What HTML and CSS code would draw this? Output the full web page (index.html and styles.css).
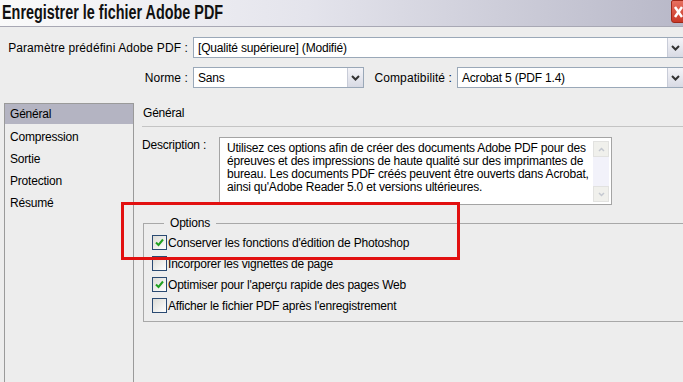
FILE: index.html
```html
<!DOCTYPE html>
<html lang="fr">
<head>
    <meta charset="UTF-8">
    <title>Enregistrer le fichier Adobe PDF</title>
    <link rel="stylesheet" href="styles.css">
</head>
<body>
    <div class="dialog">
        <div class="titlebar">
            <h1>Enregistrer le fichier Adobe PDF</h1>
            <div class="close">
                <svg width="12" height="18" viewBox="0 0 12 18"><path d="M3 4 L10 14 M10 4 L3 14" stroke="#fff" stroke-width="2.5" fill="none"/></svg>
            </div>
        </div>

        <div class="presets">
            <label class="lbl">Paramètre prédéfini Adobe PDF :</label>
            <div class="select wide">
                <span>[Qualité supérieure] (Modifié)</span>
                <span class="arrow"><svg width="9" height="6" viewBox="0 0 9 6"><path d="M1 1 L4.5 4.5 L8 1" stroke="#333" stroke-width="2" fill="none"/></svg></span>
            </div>
            <label class="lbl">Norme :</label>
            <div class="pair">
                <div class="select norme">
                    <span>Sans</span>
                    <span class="arrow"><svg width="9" height="6" viewBox="0 0 9 6"><path d="M1 1 L4.5 4.5 L8 1" stroke="#333" stroke-width="2" fill="none"/></svg></span>
                </div>
                <label class="lbl-inline">Compatibilité :</label>
                <div class="select compat">
                    <span>Acrobat 5 (PDF 1.4)</span>
                    <span class="arrow"><svg width="9" height="6" viewBox="0 0 9 6"><path d="M1 1 L4.5 4.5 L8 1" stroke="#333" stroke-width="2" fill="none"/></svg></span>
                </div>
            </div>
        </div>

        <div class="main">
            <ul class="sidebar">
                <li class="active">Général</li>
                <li>Compression</li>
                <li>Sortie</li>
                <li>Protection</li>
                <li>Résumé</li>
            </ul>

            <div class="panel">
                <div class="panel-title">Général</div>
                <div class="desc-row">
                    <div class="desc-label">Description :</div>
                    <div class="desc-box">
                        <p>Utilisez ces options afin de créer des documents Adobe PDF pour des épreuves et des impressions de haute qualité sur des imprimantes de bureau. Les documents PDF créés peuvent être ouverts dans Acrobat, ainsi qu'Adobe Reader 5.0 et versions ultérieures.</p>
                        <div class="scroll">
                            <span class="sbtn"><svg width="7" height="5" viewBox="0 0 7 5"><path d="M1 4 L3.5 1.5 L6 4" stroke="#c4c8d0" stroke-width="1.5" fill="none"/></svg></span>
                            <span class="sbtn"><svg width="7" height="5" viewBox="0 0 7 5"><path d="M1 1 L3.5 3.5 L6 1" stroke="#c4c8d0" stroke-width="1.5" fill="none"/></svg></span>
                        </div>
                    </div>
                </div>

                <fieldset class="options">
                    <legend>Options</legend>
                    <div class="check on">Conserver les fonctions d'édition de Photoshop</div>
                    <div class="check">Incorporer les vignettes de page</div>
                    <div class="check on">Optimiser pour l'aperçu rapide des pages Web</div>
                    <div class="check">Afficher le fichier PDF après l'enregistrement</div>
                </fieldset>

                <div class="highlight"></div>
            </div>
        </div>
    </div>
</body>
</html>
```

FILE: styles.css
```css
* {
    margin: 0;
    padding: 0;
    box-sizing: border-box;
}

body {
    font-family: "Liberation Sans", Arial, sans-serif;
    font-size: 12px;
    letter-spacing: -0.2px;
    color: #000;
    background: #ededed;
    overflow: hidden;
}

.dialog {
    width: 683px;
    height: 382px;
    overflow: hidden;
}

.titlebar {
    height: 27px;
    display: flex;
    justify-content: space-between;
    align-items: flex-start;
    background: linear-gradient(to right, #fafafa 0%, #e4e4ec 45%, #b8b8c8 100%);
    border-bottom: 1px solid #a8a8b4;
}

.titlebar h1 {
    font-size: 20px;
    font-weight: bold;
    letter-spacing: 0;
    margin: 1px 0 0 2px;
    color: #111;
    white-space: nowrap;
    transform: scaleX(0.72);
    transform-origin: left center;
}

.close {
    width: 14px;
    height: 23px;
    margin-right: -2px;
    background: linear-gradient(#e87060, #c83828);
    border: 1px solid #a02818;
    border-radius: 2px 0 0 3px;
    display: flex;
    align-items: center;
    justify-content: center;
}

.presets {
    display: grid;
    grid-template-columns: 188px 1fr;
    column-gap: 5px;
    row-gap: 9px;
    padding: 10px 0 0 0;
    align-items: center;
}

.lbl {
    text-align: right;
    white-space: nowrap;
    letter-spacing: 0.1px;
}

.lbl-inline {
    width: 93px;
    text-align: right;
    padding-right: 5px;
    white-space: nowrap;
    letter-spacing: 0.1px;
}

.pair {
    display: flex;
    align-items: center;
}

.select {
    height: 21px;
    flex-shrink: 0;
    background: #fff;
    border: 1px solid #9aa8b8;
    display: flex;
    align-items: center;
    justify-content: space-between;
    padding-left: 4px;
}

.select .arrow {
    width: 16px;
    height: 19px;
    border-left: 1px solid #c8ccd8;
    background: linear-gradient(#f4f4f8, #d8dae4);
    display: flex;
    align-items: center;
    justify-content: center;
}

.wide {
    width: 491px;
}

.norme {
    width: 171px;
}

.compat {
    width: 227px;
}

.main {
    display: flex;
    margin-top: 15px;
    height: 300px;
}

.sidebar {
    list-style: none;
    flex-shrink: 0;
    margin-left: 4px;
    width: 130px;
    border: 1px solid #9a9a9a;
    border-bottom: none;
}

.sidebar li {
    height: 22px;
    line-height: 22px;
    padding-left: 5px;
}

.sidebar li.active {
    background: #b4b4c2;
    height: 20px;
    line-height: 20px;
    margin-bottom: 2px;
}

.panel {
    flex: 1;
    position: relative;
    padding-left: 8px;
}

.panel-title {
    padding: 3px 0 0 1px;
    height: 24px;
    border-bottom: 1px solid #c4c4c4;
}

.desc-row {
    display: flex;
    margin-top: 10px;
}

.desc-label {
    width: 77px;
    flex-shrink: 0;
    padding-top: 1px;
}

.desc-box {
    width: 393px;
    height: 68px;
    flex-shrink: 0;
    background: #fff;
    border: 1px solid #a4a4a4;
    display: flex;
    padding: 3px 2px 2px 7px;
}

.desc-box p {
    flex: 1;
    line-height: 13px;
    padding-top: 1px;
}

.scroll {
    width: 16px;
    flex-shrink: 0;
    background: #f2f2fa;
    display: flex;
    flex-direction: column;
    justify-content: space-between;
    margin-left: 4px;
}

.sbtn {
    height: 16px;
    background: #f0f0ec;
    border: 1px solid #e2e2e0;
    display: flex;
    align-items: center;
    justify-content: center;
}

.options {
    margin: 11px 0 0 1px;
    border: 1px solid #a8a8a8;
    border-right: none;
    padding: 2px 0 5px 8px;
    width: 560px;
}

.options legend {
    margin-left: 12px;
    padding: 0 6px;
}

.check {
    height: 21px;
    display: flex;
    align-items: center;
}

.check::before {
    content: "";
    width: 13px;
    height: 13px;
    margin-right: 1px;
    border: 1px solid #2a4a72;
    background: linear-gradient(135deg, #dcdcd6, #fff);
}

.check.on::before {
    background: url("data:image/svg+xml,%3Csvg xmlns='http://www.w3.org/2000/svg' width='11' height='11'%3E%3Cpath d='M2 5.5 L4.5 8 L9 2.5' stroke='%2321a121' stroke-width='2' fill='none'/%3E%3C/svg%3E") center no-repeat, linear-gradient(135deg, #dcdcd6, #fff);
}

.highlight {
    position: absolute;
    left: -13px;
    top: 99px;
    width: 339px;
    height: 58px;
    border: 3px solid #e21010;
}
```
